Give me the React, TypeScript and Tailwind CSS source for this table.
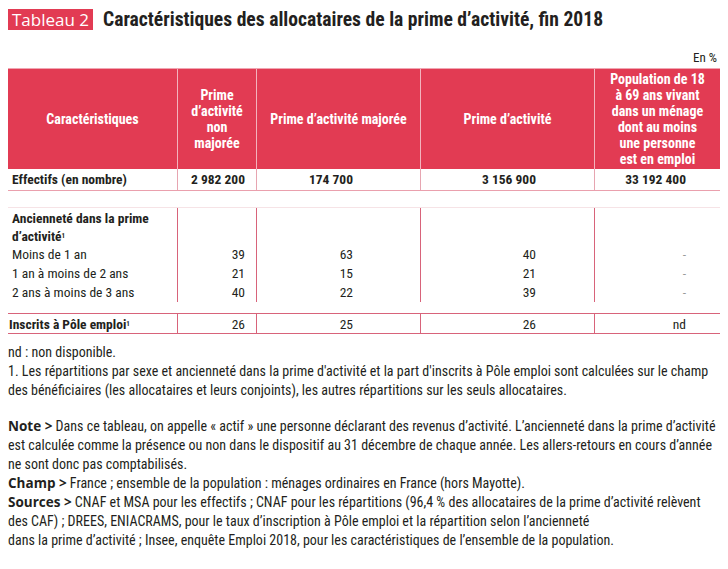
const cols = "grid grid-cols-[169px_79px_164px_174px_126px]";

const anciennete = [
  { label: "Moins de 1 an", v: ["39", "63", "40", "-"] },
  { label: "1 an à moins de 2 ans", v: ["21", "15", "21", "-"] },
  { label: "2 ans à moins de 3 ans", v: ["40", "22", "39", "-"] },
];

// right padding so numbers line up on the right edge of the big totals
const pads = ["pr-[11px]", "pr-[67px]", "pr-[58px]", "pr-[34px]"];

const wide = "font-['Open_Sans',sans-serif] font-bold text-[13.5px]";

export default function App() {
  return (
    <div className="w-[728px] h-[569px] bg-white text-[#231f20] px-2 pt-[9px] overflow-hidden font-['Roboto_Condensed','Roboto',sans-serif]">
      {/* Title */}
      <div className="flex items-center gap-[10px]">
        <span className="bg-[#e23b53] text-white h-[21px] w-[85px] flex items-center justify-center text-[17px] font-['Open_Sans',sans-serif] leading-none">
          Tableau 2
        </span>
        <h1 className="text-[19.6px] font-bold leading-none">
          Caractéristiques des allocataires de la prime d’activité, fin 2018
        </h1>
      </div>

      <div className="text-right text-[13px] leading-none mt-[21px] pr-[3px]">En %</div>

      {/* Table */}
      <div className="mt-[4px] w-[712px] text-[13.5px]">
        <div className={`${cols} border-t border-[#f0a5b2] bg-[#e23b53] text-white font-bold text-[14px] leading-[16px] h-[101px]`}>
          <div className="flex items-center justify-center">Caractéristiques</div>
          <div className="flex items-center justify-center text-center border-l border-[#f3b3bd]">
            Prime
            <br />
            d’activité
            <br />
            non
            <br />
            majorée
          </div>
          <div className="flex items-center justify-center border-l border-[#f3b3bd]">Prime d’activité majorée</div>
          <div className="flex items-center justify-center border-l border-[#f3b3bd]">Prime d’activité</div>
          <div className="flex items-center justify-center text-center border-l border-[#f3b3bd]">
            Population de 18
            <br />à 69 ans vivant
            <br />
            dans un ménage
            <br />
            dont au moins
            <br />
            une personne
            <br />
            est en emploi
          </div>
        </div>

        <div className={`${cols} font-bold h-[22px] items-center border-b border-[#eaa0ad]`}>
          <div className="pl-[4px]">Effectifs (en nombre)</div>
          {["2 982 200", "174 700", "3 156 900", "33 192 400"].map((v, i) => (
            <div key={v} className={`h-full flex items-center justify-end border-l border-[#e7a5b1] ${pads[i]}`}>
              {v}
            </div>
          ))}
        </div>

        <div className={`${cols} mt-[16px] border-t border-[#f6e3e6]`}>
          <div className="pl-[4px] pt-[1px]">
            <div className="font-bold leading-[18px]">
              Ancienneté dans la prime
              <br />
              d’activité<sup className="text-[7px]">1</sup>
            </div>
            {anciennete.map((r) => (
              <div key={r.label} className="leading-[19px]">
                {r.label}
              </div>
            ))}
          </div>
          {[0, 1, 2, 3].map((c) => (
            <div key={c} className={`pt-[37px] text-right border-l border-[#d8637a] ${pads[c]}`}>
              {anciennete.map((r) => (
                <div key={r.label} className={`leading-[19px] ${c === 3 ? "text-[#9a9a9a]" : ""}`}>
                  {r.v[c]}
                </div>
              ))}
            </div>
          ))}
        </div>

        <div className={`${cols} mt-[11px] h-[21px] items-center border-y border-[#d8637a]`}>
          <div className="pl-[1px] font-bold">
            Inscrits à Pôle emploi<sup className="text-[7px]">1</sup>
          </div>
          {["26", "25", "26", "nd"].map((v, i) => (
            <div key={i} className={`h-full flex items-center justify-end border-l border-[#d8637a] ${pads[i]}`}>
              {v}
            </div>
          ))}
        </div>
      </div>

      {/* Notes */}
      <div className="mt-[9px] text-[14px] leading-[19px]">
        <p>nd : non disponible.</p>
        <p>
          1. Les répartitions par sexe et ancienneté dans la prime d'activité et la part d'inscrits à Pôle emploi sont calculées sur le champ
          <br />
          des bénéficiaires (les allocataires et leurs conjoints), les autres répartitions sur les seuls allocataires.
        </p>
        <p className="mt-[17px]">
          <b className={wide}>Note &gt;</b> Dans ce tableau, on appelle « actif » une personne déclarant des revenus d’activité. L’ancienneté dans la
          prime d’activité
          <br />
          est calculée comme la présence ou non dans le dispositif au 31 décembre de chaque année. Les allers-retours en cours d’année
          <br />
          ne sont donc pas comptabilisés.
        </p>
        <p>
          <b className={wide}>Champ &gt;</b> France ; ensemble de la population : ménages ordinaires en France (hors Mayotte).
        </p>
        <p>
          <b className={wide}>Sources &gt;</b> CNAF et MSA pour les effectifs ; CNAF pour les répartitions (96,4 % des allocataires de la prime
          d’activité relèvent
          <br />
          des CAF) ; DREES, ENIACRAMS, pour le taux d’inscription à Pôle emploi et la répartition selon l’ancienneté
          <br />
          dans la prime d’activité ; Insee, enquête Emploi 2018, pour les caractéristiques de l’ensemble de la population.
        </p>
      </div>
    </div>
  );
}
